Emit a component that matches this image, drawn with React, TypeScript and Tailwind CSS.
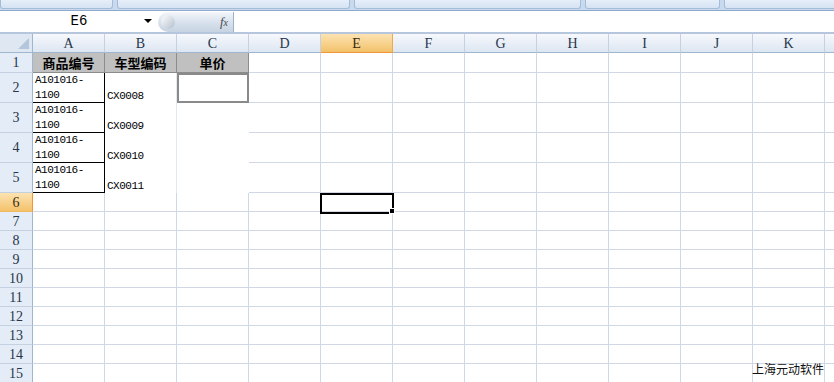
import React from "react";

const COLS = ["A", "B", "C", "D", "E", "F", "G", "H", "I", "J", "K", "L"];

const rowHeights: Record<number, string> = {
  1: "h-[20px]",
  2: "h-[30px]",
  3: "h-[30px]",
  4: "h-[30px]",
  5: "h-[30px]",
};

const mono = { fontFamily: '"Liberation Mono", "Noto Sans CJK SC", monospace' };
const serif = { fontFamily: '"Liberation Serif", "Noto Sans CJK SC", serif' };
const cjk = { fontFamily: '"Noto Sans CJK SC", "Noto Sans", sans-serif' };

const headers = ["商品编号", "车型编码", "单价"];
const codes = ["CX0008", "CX0009", "CX0010", "CX0011"];

function Cell({ row, col }: { row: number; col: number }) {
  const letter = COLS[col];
  const h = rowHeights[row] ?? "h-[19px]";
  const base = `${h} shrink-0 border-r border-b border-[#d0d7e5] bg-white`;

  if (row === 1 && col < 3) {
    return (
      <div
        className={`${h} flex items-center justify-center border-r border-b border-[#8c8c8c] bg-[#c0c0c0] text-[13px] font-bold text-black`}
        style={cjk}
      >
        {headers[col]}
      </div>
    );
  }
  if (row >= 2 && row <= 5 && col === 0) {
    return (
      <div
        className={`${h} flex flex-col justify-between border-r border-b border-black bg-white pl-[2px] text-[11px] leading-[14px] tracking-[-0.5px] text-black`}
        style={mono}
      >
        <span>A101016-</span>
        <span>1100</span>
      </div>
    );
  }
  if (row >= 2 && row <= 5 && col === 1) {
    return (
      <div
        className={`${h} flex items-end border-r border-[#e4e8ef] bg-white pl-[2px] text-[11px] leading-[14px] tracking-[-0.5px] text-black`}
        style={mono}
      >
        {codes[row - 2]}
      </div>
    );
  }
  if (row === 2 && col === 2) {
    return <div className={`${h} border-2 border-[#8a8a8a] bg-white`} />;
  }
  if (row >= 3 && row <= 5 && col === 2) {
    return <div className={`${h} bg-white`} />;
  }
  if (row === 6 && letter === "E") {
    return (
      <div className={`${base} relative`}>
        <div className="absolute -left-[1px] top-0 h-[21px] w-[74px] border-2 border-black" />
        <div className="absolute -bottom-[3px] -right-[3px] h-[6px] w-[6px] border border-white bg-black" />
      </div>
    );
  }
  return <div className={base} />;
}

export default function App() {
  const rows = Array.from({ length: 15 }, (_, i) => i + 1);
  return (
    <div className="relative h-[382px] w-[834px] overflow-hidden bg-white">
      {/* ribbon edge */}
      <div className="flex h-[11px] gap-[4px] border-b border-[#8ea9cc] bg-[#c9d9ee]">
        {[113, 233, 227, 135, 120].map((w, i) => (
          <div
            key={i}
            className="h-[9px] shrink-0 rounded-b-[3px] border border-t-0 border-[#a5bcd9] bg-gradient-to-b from-[#e6eef9] to-[#d6e3f3]"
            style={{ width: w }}
          />
        ))}
      </div>

      {/* formula bar */}
      <div className="flex h-[23px] items-center border-b-2 border-[#b6c6dc] bg-white">
        <div className="relative flex h-full w-[158px] items-center justify-center">
          <span className="text-[14px] text-black" style={mono}>
            E6
          </span>
          <span className="absolute right-[6px] top-[8px] h-0 w-0 border-x-[4px] border-t-[4px] border-x-transparent border-t-black" />
        </div>
        <div className="flex h-[20px] w-[76px] items-center justify-between rounded-l-full border-r border-[#9fb1c8] bg-gradient-to-b from-[#f3f6fa] via-[#d9e2ee] to-[#c7d3e2] pl-[3px] pr-[5px]">
          <div className="h-[14px] w-[14px] rounded-full bg-gradient-to-br from-[#ffffff] to-[#b3bfcd]" />
          <span className="text-[13px] italic text-[#4a4a4a]" style={serif}>
            f<span className="text-[10px]">x</span>
          </span>
        </div>
        <div className="flex-1" />
      </div>

      {/* grid */}
      <div className="grid grid-cols-[33px_repeat(11,72px)_72px]">
        {/* corner */}
        <div className="relative h-[19px] border-r border-b border-[#9eb6ce] bg-[#dfe7f2]">
          <div className="absolute bottom-[3px] right-[3px] h-0 w-0 border-b-[11px] border-l-[11px] border-b-[#b4c6dc] border-l-transparent" />
        </div>
        {COLS.map((c) => (
          <div
            key={c}
            className={`flex h-[19px] items-center justify-center border-r border-b text-[14px] ${
              c === "E"
                ? "border-r-[#f2a845] border-b-[#f29536] bg-gradient-to-b from-[#fce3b1] to-[#f3c26a] text-[#3b2a10]"
                : "border-r-[#c5d1e0] border-b-[#9eb6ce] bg-gradient-to-b from-[#f6f8fc] to-[#dde6f2] text-[#27364a]"
            }`}
            style={serif}
          >
            {c === "L" ? "" : c}
          </div>
        ))}

        {rows.map((r) => (
          <React.Fragment key={r}>
            <div
              className={`flex ${rowHeights[r] ?? "h-[19px]"} items-center justify-center border-r border-b text-[14px] ${
                r === 6
                  ? "border-r-[#f29536] border-b-[#f2b860] bg-gradient-to-b from-[#fce3b1] to-[#f3c26a] text-[#3b2a10]"
                  : "border-r-[#9eb6ce] border-b-[#c5d1e0] bg-[#e4ecf7] text-[#27364a]"
              }`}
              style={serif}
            >
              {r}
            </div>
            {COLS.map((c, ci) => (
              <Cell key={c} row={r} col={ci} />
            ))}
          </React.Fragment>
        ))}
      </div>

      <div
        className="pointer-events-none absolute left-[752px] top-[360px] text-[12px] text-[#111]"
        style={cjk}
      >
        上海元动软件
      </div>
    </div>
  );
}
